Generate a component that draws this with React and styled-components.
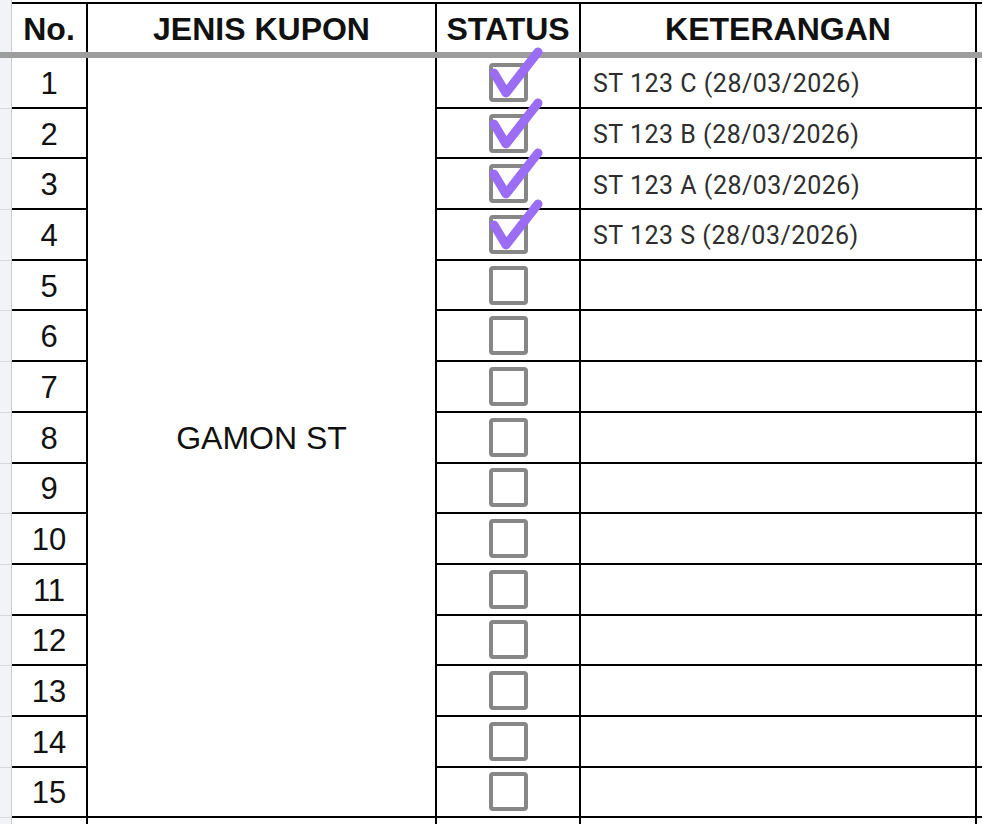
import React from 'react';
import styled, { createGlobalStyle } from 'styled-components';

const GlobalStyle = createGlobalStyle`
  html, body {
    margin: 0;
    padding: 0;
    background: #ffffff;
    overflow: hidden;
  }
  * { box-sizing: border-box; }
`;

const Sheet = styled.div`
  display: grid;
  grid-template-columns: 12px 76px 349px 144px 396px 1fr;
  grid-template-rows: 2px 50px 6px repeat(15, 50.7px) 20px;
  width: 982px;
  height: 824px;
  font-family: "Liberation Sans", Arial, sans-serif;
  color: #111;
`;

const Strip = styled.div`
  background: #f2f3f7;
  border-right: 1px solid #c9ccd2;
  border-bottom: 1px solid ${(p) => (p.$line ? '#d6d8dd' : 'transparent')};
`;

const Blank = styled.div`
  background: #ffffff;
`;

const HeadCell = styled.div`
  display: flex;
  align-items: center;
  justify-content: center;
  border-top: 2px solid #000;
  border-right: 2px solid #000;
  font-weight: bold;
  font-size: 32px;
  padding-top: 3px;
`;

const HeadEdge = styled.div`
  border-top: 2px solid #000;
`;

const FreezeBar = styled.div`
  grid-column: 1 / -1;
  background: #9d9d9d;
`;

const NoCell = styled.div`
  display: flex;
  align-items: center;
  justify-content: center;
  border-right: 2px solid #000;
  border-bottom: 2px solid #000;
  font-size: 31px;
  padding-top: 3px;
`;

const MergedCell = styled.div`
  grid-row: span 15;
  display: flex;
  align-items: center;
  justify-content: center;
  border-right: 2px solid #000;
  border-bottom: 2px solid #000;
  font-size: 32px;
  padding-top: 2px;
`;

const StatusCell = styled.div`
  position: relative;
  display: flex;
  align-items: center;
  justify-content: center;
  border-right: 2px solid #000;
  border-bottom: 2px solid #000;
`;

const Box = styled.div`
  width: 39px;
  height: 39px;
  border: 4px solid #878787;
  border-radius: 4px;
  margin-left: 1px;
`;

const Tick = styled.svg`
  position: absolute;
  left: 50px;
  top: -15px;
  width: 60px;
  height: 60px;
  overflow: visible;
  pointer-events: none;
`;

const NoteCell = styled.div`
  display: flex;
  align-items: center;
  padding-left: 12px;
  padding-top: 3px;
  border-right: 2px solid #000;
  border-bottom: 2px solid #000;
  font-family: Roboto, "Liberation Sans", sans-serif;
  font-size: 25px;
  letter-spacing: 0.5px;
  color: #2e2e2e;
`;

const EdgeCell = styled.div`
  border-bottom: 2px solid #000;
`;

const NextCell = styled.div`
  border-right: ${(p) => (p.$right ? '2px solid #000' : 'none')};
`;

const notes = [
  'ST 123 C (28/03/2026)',
  'ST 123 B (28/03/2026)',
  'ST 123 A (28/03/2026)',
  'ST 123 S (28/03/2026)',
];

const rows = Array.from({ length: 15 }, (_, i) => i + 1);

const Check = () => (
  <Tick viewBox="0 0 60 60">
    <path
      d="M7 30 L19 50 L51 9"
      fill="none"
      stroke="#9b6cf4"
      strokeWidth="9"
      strokeLinecap="round"
      strokeLinejoin="round"
    />
  </Tick>
);

export default function App() {
  return (
    <>
      <GlobalStyle />
      <Sheet>
        {/* top gap */}
        <Strip />
        <Blank />
        <Blank />
        <Blank />
        <Blank />
        <Blank />

        {/* header */}
        <Strip />
        <HeadCell>No.</HeadCell>
        <HeadCell>JENIS KUPON</HeadCell>
        <HeadCell>STATUS</HeadCell>
        <HeadCell>KETERANGAN</HeadCell>
        <HeadEdge />

        <FreezeBar />

        {rows.map((n) => (
          <React.Fragment key={n}>
            <Strip $line style={{ gridColumn: 1 }} />
            <NoCell style={{ gridColumn: 2 }}>{n}</NoCell>
            {n === 1 && <MergedCell style={{ gridColumn: 3 }}>GAMON ST</MergedCell>}
            <StatusCell style={{ gridColumn: 4 }}>
              <Box />
              {n <= 4 && <Check />}
            </StatusCell>
            <NoteCell style={{ gridColumn: 5 }}>{notes[n - 1] || ''}</NoteCell>
            <EdgeCell style={{ gridColumn: 6 }} />
          </React.Fragment>
        ))}

        <Strip />
        <NextCell $right />
        <NextCell $right />
        <NextCell $right />
        <NextCell $right />
        <NextCell />
      </Sheet>
    </>
  );
}
